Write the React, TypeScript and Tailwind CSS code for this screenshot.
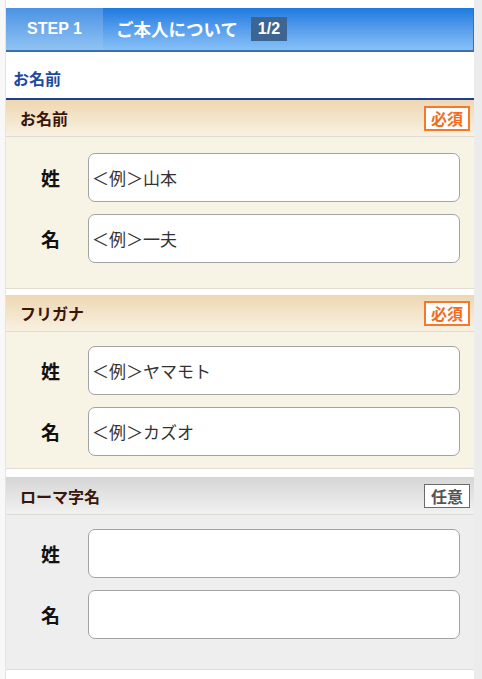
import React from "react";

const jp = { fontFamily: '"Noto Sans CJK JP", "Noto Sans", sans-serif' };

function Row({ label, placeholder }: { label: string; placeholder: string }) {
  return (
    <div className="flex items-center">
      <div className="w-[82px] pl-[7px] text-center text-[19px] font-bold text-[#111] leading-none">{label}</div>
      <input
        className="flex-1 mr-[14px] h-[49px] rounded-[7px] border border-[#a3a3a3] bg-white pl-[3px] text-[17px] text-[#333] placeholder:text-[#333] outline-none"
        placeholder={placeholder}
        style={jp}
      />
    </div>
  );
}

function Section({
  title,
  badge,
  required,
  gray,
  rows,
  pt,
  pb,
}: {
  title: string;
  badge: string;
  required: boolean;
  gray?: boolean;
  rows: [string, string][];
  pt: string;
  pb: string;
}) {
  return (
    <div>
      <div
        className={
          "flex items-center justify-between pl-[14px] pr-[4px] border-b border-[#dedbd4] " +
          (gray
            ? "h-[38px] bg-gradient-to-b from-[#d6d6d6] to-[#f1f1f1]"
            : "h-[37px] bg-gradient-to-b from-[#eed7b2] to-[#f8f1e2]")
        }
      >
        <span className="text-[16px] font-bold text-[#3a160a]">{title}</span>
        {required ? (
          <span className="h-[25px] w-[46px] flex items-center justify-center border-2 border-[#f37a2c] bg-white text-[16px] font-bold text-[#f06d1e] leading-none">
            {badge}
          </span>
        ) : (
          <span className="h-[24px] w-[46px] flex items-center justify-center border border-[#6a6a6a] bg-white text-[16px] font-bold text-[#555] leading-none">
            {badge}
          </span>
        )}
      </div>
      <div
        className={
          "flex flex-col gap-[12px] border-b border-[#e2ddd1] " +
          pt +
          " " +
          pb +
          " " +
          (gray ? "bg-[#eeeeee]" : "bg-[#f7f3e5]")
        }
      >
        {rows.map(([l, p]) => (
          <Row key={l} label={l} placeholder={p} />
        ))}
      </div>
    </div>
  );
}

export default function App() {
  return (
    <div className="min-h-[679px] bg-white flex" style={jp}>
      <div className="w-[6px] bg-[#f8f8f8] border-r border-[#e4e4e4]" />
      <div className="flex-1 pt-[8px]">
        <div className="h-[44px] flex border-b-2 border-r border-[#3c70a9]">
          <div
            className="w-[97px] flex items-center justify-center bg-gradient-to-b from-[#4b92e4] to-[#90c3f3] text-white text-[16px] font-bold"
            style={{ fontFamily: '"Liberation Sans", Arial, sans-serif' }}
          >
            STEP 1
          </div>
          <div className="flex-1 flex items-center pl-[13px] bg-gradient-to-b from-[#1a7ae0] to-[#88c0f7]">
            <span className="text-white text-[17.5px] font-bold">ご本人について</span>
            <span
              className="ml-[13px] h-[24px] w-[36px] flex items-center justify-center bg-[#3d6592] text-white text-[16px] font-bold"
              style={{ fontFamily: '"Liberation Sans", Arial, sans-serif' }}
            >
              1/2
            </span>
          </div>
        </div>
        <div className="h-[48px] flex items-end pb-[8px] pl-[7px] border-b-2 border-[#1f3f8c]">
          <span className="text-[16px] font-bold text-[#1c4a9f]">お名前</span>
        </div>
        <Section
          title="お名前"
          badge="必須"
          required
          pt="pt-[16px]"
          pb="pb-[25px]"
          rows={[
            ["姓", "＜例＞山本"],
            ["名", "＜例＞一夫"],
          ]}
        />
        <div className="h-[6px] bg-white" />
        <Section
          title="フリガナ"
          badge="必須"
          required
          pt="pt-[14px]"
          pb="pb-[12px]"
          rows={[
            ["姓", "＜例＞ヤマモト"],
            ["名", "＜例＞カズオ"],
          ]}
        />
        <div className="h-[8px] bg-white" />
        <Section
          title="ローマ字名"
          badge="任意"
          required={false}
          gray
          pt="pt-[14px]"
          pb="pb-[30px]"
          rows={[
            ["姓", ""],
            ["名", ""],
          ]}
        />
      </div>
      <div className="w-[8px] bg-[#ececec]" />
    </div>
  );
}
